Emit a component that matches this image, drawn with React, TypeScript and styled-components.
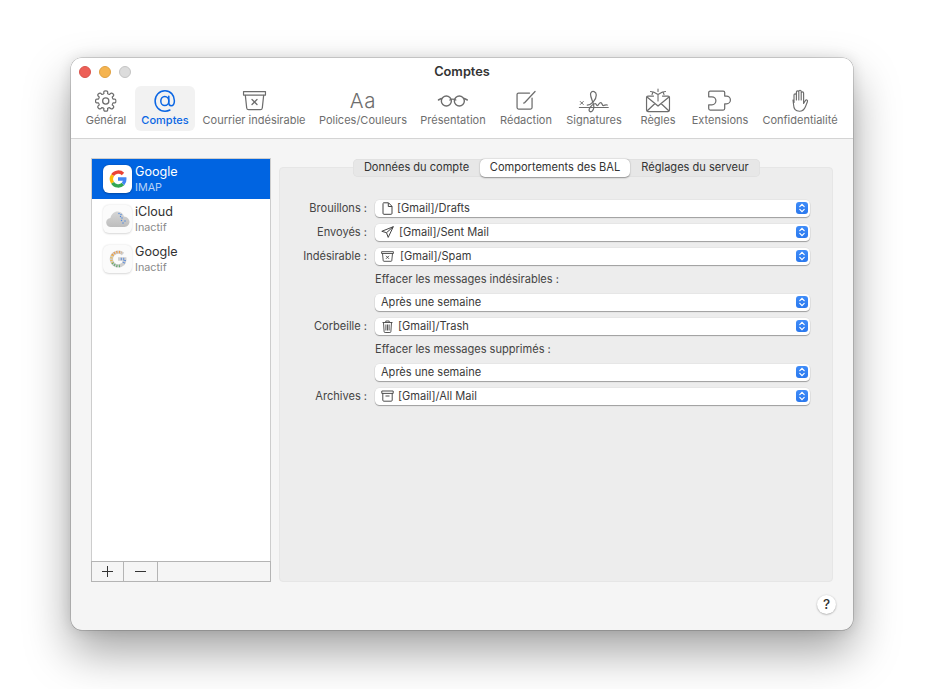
import React from 'react'
import styled, { createGlobalStyle } from 'styled-components'

const Global = createGlobalStyle`
  html, body { margin: 0; padding: 0; background: #fff; height: 100%; overflow: hidden; }
  body { font-family: "Inter", "Liberation Sans", sans-serif; -webkit-font-smoothing: antialiased; }
`

const Page = styled.div`
  position: relative;
  width: 930px;
  height: 689px;
  overflow: hidden;
`

const Window = styled.div`
  position: absolute;
  left: 71px;
  top: 58px;
  width: 782px;
  height: 572px;
  border-radius: 11px;
  background: #f5f5f5;
  box-shadow: 0 0 0 0.5px rgba(0, 0, 0, 0.28), 0 22px 46px rgba(0, 0, 0, 0.36), 0 0 14px rgba(0, 0, 0, 0.12);
`

const TitleBar = styled.div`
  position: relative;
  background: #fff;
  border-radius: 11px 11px 0 0;
  border-bottom: 1px solid #d4d4d4;
  box-sizing: border-box;
  height: 81px;
`

const Lights = styled.div`
  position: absolute;
  left: 8px;
  top: 8px;
  display: flex;
  gap: 8px;
`

const Light = styled.span<{ $color: string; $edge: string }>`
  width: 12px;
  height: 12px;
  border-radius: 50%;
  box-sizing: border-box;
  background: ${(p) => p.$color};
  border: 0.5px solid ${(p) => p.$edge};
`

const Title = styled.div`
  position: absolute;
  top: 6px;
  left: 0;
  width: 100%;
  text-align: center;
  font-size: 12.8px;
  line-height: 16px;
  font-weight: 600;
  color: #333;
`

const Tool = styled.div<{ $center: number; $active?: boolean }>`
  position: absolute;
  top: 28px;
  left: ${(p) => p.$center - 71}px;
  transform: translateX(-50%);
  height: 45px;
  display: flex;
  flex-direction: column;
  align-items: center;
  white-space: nowrap;
  font-size: 11px;
  line-height: 14px;
  color: ${(p) => (p.$active ? '#0a66e4' : '#6e6e6e')};
  font-weight: ${(p) => (p.$active ? 500 : 400)};
  ${(p) => (p.$active ? 'background: #f2f2f2; border-radius: 6px; width: 60px;' : '')}
`

const ToolIcon = styled.div`
  height: 27px;
  box-sizing: border-box;
  padding-top: 2px;
  display: flex;
  align-items: center;
  justify-content: center;
`

const Sidebar = styled.div`
  position: absolute;
  left: 20px;
  top: 100px;
  width: 180px;
  height: 424px;
  box-sizing: border-box;
  border: 1px solid #cdcdcd;
  background: #fff;
  display: flex;
  flex-direction: column;
`

const AccountList = styled.div`
  flex: 1;
`

const Account = styled.div<{ $selected?: boolean }>`
  height: 40px;
  display: flex;
  align-items: center;
  padding-left: 11px;
  background: ${(p) => (p.$selected ? '#0064e1' : 'transparent')};
`

const AppIcon = styled.div<{ $muted?: boolean }>`
  width: 29px;
  height: 28px;
  border-radius: 6px;
  background: ${(p) => (p.$muted ? '#fbfbfb' : '#fff')};
  box-shadow: 0 0.5px 2px rgba(0, 0, 0, ${(p) => (p.$muted ? 0.16 : 0.28)});
  display: flex;
  align-items: center;
  justify-content: center;
  margin-right: 3px;
`

const AccountText = styled.div`
  display: flex;
  flex-direction: column;
`

const AccountName = styled.span<{ $selected?: boolean }>`
  font-size: 12.6px;
  line-height: 15px;
  color: ${(p) => (p.$selected ? '#fff' : '#333')};
`

const AccountState = styled.span<{ $selected?: boolean }>`
  font-size: 10.8px;
  line-height: 14px;
  margin-top: 2px;
  color: ${(p) => (p.$selected ? '#b9d3f6' : '#8a8a8a')};
`

const Footer = styled.div`
  height: 21px;
  display: flex;
  box-sizing: border-box;
  margin: 0 -1px -1px;
  border: 1px solid #b4b4b4;
  background: #f5f5f5;
`

const FooterButton = styled.div<{ $width: number }>`
  width: ${(p) => p.$width}px;
  border-right: 1px solid #b4b4b4;
  display: flex;
  align-items: center;
  justify-content: center;
`

const Panel = styled.div`
  position: absolute;
  left: 208px;
  top: 109px;
  width: 554px;
  height: 415px;
  box-sizing: border-box;
  border-radius: 4px;
  background: #ededed;
  border: 1px solid #e6e6e6;
`

const Tabs = styled.div`
  position: absolute;
  left: 73px;
  top: -9px;
  width: 407px;
  height: 18px;
  box-sizing: border-box;
  display: flex;
  background: #e7e7e7;
  border-radius: 5px;
  box-shadow: inset 0 0 0 0.5px #dcdcdc;
`

const Tab = styled.div<{ $width: number; $active?: boolean }>`
  width: ${(p) => p.$width}px;
  height: 18px;
  line-height: 17px;
  text-align: center;
  font-size: 11.05px;
  color: #333;
  white-space: nowrap;
  ${(p) =>
    p.$active
      ? 'background: #fff; border-radius: 5px; box-shadow: 0 0.5px 1.5px rgba(0,0,0,.4);'
      : ''}
`

const Form = styled.div`
  position: absolute;
  left: 0;
  top: 28px;
  width: 100%;
`

const Row = styled.div<{ $height?: number }>`
  display: flex;
  align-items: center;
  height: ${(p) => p.$height ?? 24}px;
`

const Label = styled.div`
  width: 87px;
  text-align: right;
  font-size: 11.05px;
  color: #444;
  white-space: nowrap;
  margin-right: 8px;
`

const Note = styled.div`
  font-size: 11.05px;
  color: #444;
  white-space: nowrap;
`

const Select = styled.div`
  position: relative;
  width: 435px;
  height: 17px;
  box-sizing: border-box;
  background: #fff;
  border-radius: 4.5px;
  box-shadow: 0 0 0 0.5px rgba(0, 0, 0, 0.06), 0 1px 1px rgba(0, 0, 0, 0.32);
  display: flex;
  align-items: center;
  padding-left: 6px;
  font-size: 11.05px;
  color: #3a3a3a;
  white-space: nowrap;
`

const SelectIcon = styled.span<{ $gap: number }>`
  width: 13px;
  height: 13px;
  margin-right: ${(p) => p.$gap}px;
  display: flex;
  align-items: center;
  justify-content: center;
`

const Stepper = styled.span`
  position: absolute;
  right: 2px;
  top: 2.5px;
  width: 12px;
  height: 12px;
  border-radius: 3px;
  background: linear-gradient(#3f8cf8, #2a78ee);
  display: flex;
  align-items: center;
  justify-content: center;
`

const Help = styled.div`
  position: absolute;
  left: 746px;
  top: 537px;
  width: 19px;
  height: 19px;
  border-radius: 50%;
  background: #fff;
  box-shadow: 0 0.5px 2px rgba(0, 0, 0, 0.35);
  text-align: center;
  font-size: 13.5px;
  line-height: 19px;
  font-weight: 500;
  color: #333;
`

const Line = { fill: 'none', stroke: '#6d6d6d', strokeWidth: 1.25, strokeLinecap: 'round', strokeLinejoin: 'round' } as const

const gearPath = (() => {
  const pts: string[] = []
  const teeth = 8
  const p = (r: number, t: number) =>
    `${(11 + r * Math.cos(t)).toFixed(2)} ${(11 + r * Math.sin(t)).toFixed(2)}`
  for (let i = 0; i < teeth; i++) {
    const a = (i / teeth) * Math.PI * 2 - Math.PI / 2
    const s = Math.PI / teeth
    pts.push(`${i === 0 ? 'M' : 'L'}${p(7.6, a - s * 0.62)}`)
    pts.push(`Q${p(10.6, a - s * 0.62)} ${p(10.2, a)}`)
    pts.push(`Q${p(10.6, a + s * 0.62)} ${p(7.6, a + s * 0.62)}`)
    pts.push(`Q${p(7.1, a + s)} ${p(7.6, a + s * 1.38)}`)
  }
  return pts.join(' ') + 'Z'
})()

const GearIcon = () => (
  <svg width="22" height="22" viewBox="0 0 22 22">
    <path d={gearPath} {...Line} />
    <circle cx="11" cy="11" r="3.1" {...Line} />
  </svg>
)

const AtIcon = () => (
  <svg width="22" height="24" viewBox="0 0 22 24">
    <g fill="none" stroke="#0a66e4" strokeWidth="1.5" strokeLinecap="round">
      <ellipse cx="10.800" cy="12" rx="4" ry="4.600" />
      <path d="M14.800 7.300v6.500c0 1.800 1 2.900 2.300 2.900 2 0 3.300-2 3.300-5C20.400 6 16.400 1.800 11 1.800 5.300 1.800 1.100 6.300 1.100 12s4.200 10.200 9.900 10.200c1.900 0 3.500-.4 4.900-1.200" />
    </g>
  </svg>
)

const JunkIcon = () => (
  <svg width="24" height="21" viewBox="0 0 24 21">
    <path d="M1 1.500h22v3.500H1zM2.800 5l1.400 13a2 2 0 0 0 2 1.700h11.600a2 2 0 0 0 2-1.700L21.200 5M9.500 9.500l5 5M14.500 9.500l-5 5" {...Line} />
  </svg>
)

const FontIcon = styled.span`
  font-size: 20.5px;
  font-weight: 300;
  line-height: 24px;
  color: #6d6d6d;
  letter-spacing: 0.6px;
`

const GlassesIcon = () => (
  <svg width="31" height="14" viewBox="0 0 31 14">
    <path d="M1 6l3-1.500M30 6l-3-1.500M12.500 6c1.800-1 4.200-1 6 0" {...Line} strokeWidth={1.4} />
    <circle cx="9" cy="7" r="5" {...Line} strokeWidth={1.4} />
    <circle cx="22" cy="7" r="5" {...Line} strokeWidth={1.4} />
  </svg>
)

const ComposeIcon = () => (
  <svg width="20" height="21" viewBox="0 0 20 21">
    <path d="M13.500 3H2.500A1.500 1.500 0 0 0 1 4.500v13A1.500 1.500 0 0 0 2.500 19h12a1.500 1.500 0 0 0 1.500-1.500V8M7.500 13l1-.2L19 1.500" {...Line} />
  </svg>
)

const SignatureIcon = () => (
  <svg width="31" height="24" viewBox="0 0 31 24">
    <path d="M1 18.500h29" {...Line} strokeWidth={1.1} />
    <path d="M2 12.500l3 3M5 12.500l-3 3" {...Line} strokeWidth={1} />
    <path d="M9 16c4 0 9-5 9-10 0-3.500-4-5-5.500-2C11 7 15 12 15.500 17c.3 4-2 6.500-4 5.500-2-1.500 1-7 5.500-8 1.500 0 1 2.500 2.500 2 1-1 1.500-3 3-3s1 3 2.500 3 2-1 4-.5" {...Line} strokeWidth={1.25} />
  </svg>
)

const RulesIcon = () => (
  <svg width="25" height="25" viewBox="0 0 25 25">
    <path d="M8 8H2.500A1.500 1.500 0 0 0 1 9.500V22a1.500 1.500 0 0 0 1.500 1.500h20A1.500 1.500 0 0 0 24 22V9.500A1.500 1.500 0 0 0 22.500 8H17M1.500 9l11 9 11-9M1.500 23l8-7.500M23.500 23l-8-7.500" {...Line} />
    <path d="M12.500 13V6.500L8 4M12.500 6.500l4.500-2.500M5 3.500L7.500 4 6.500 6.500M20 3.500L17.500 4l1 2.500M12.500 1v2.500" {...Line} strokeWidth={1.1} />
  </svg>
)

const PuzzleIcon = () => (
  <svg width="25" height="21" viewBox="0 0 25 21">
    <path d="M2.500 1h13a1.500 1.500 0 0 1 1.500 1.500V6h1.800a3.900 3.900 0 0 1 0 7.800H17v4.700a1.500 1.500 0 0 1-1.500 1.500h-13A1.500 1.500 0 0 1 1 18.500v-3.700h3.200a4 4 0 0 0 0-8H1V2.500A1.500 1.500 0 0 1 2.500 1z" {...Line} />
  </svg>
)

const HandIcon = () => (
  <svg width="19" height="24" viewBox="0 0 19 24">
    <path d="M3.600 13.500V6a1.200 1.200 0 0 1 2.400 0v5M6 11V3a1.200 1.200 0 0 1 2.400 0v8M8.400 11V2.400a1.200 1.200 0 0 1 2.400 0V11M10.800 11V4a1.200 1.200 0 0 1 2.400 0v10.500l1.700-2.800c.9-1.400 2.800-.6 2.100 1l-2 5c-1.200 3-3.300 4.500-6 4.500-3.500 0-5.700-2.400-5.800-6.200l-.6-5" {...Line} strokeWidth={1.15} />
  </svg>
)

// anneau du G, en quatre couleurs
const GoogleMark = () => (
  <svg width="20" height="20" viewBox="0 0 20 20" fill="none" strokeWidth="3.4">
    <path d="M4.600 6.200A6.700 6.700 0 0 1 15 5" stroke="#ea4335" />
    <path d="M4.600 6.200a6.900 6.900 0 0 0 0 7.600" stroke="#fbbc05" />
    <path d="M4.600 13.800A6.700 6.700 0 0 0 15 15" stroke="#34a853" />
    <path d="M15 15a6.700 6.700 0 0 0 1.800-5H10" stroke="#4285f4" />
  </svg>
)

const InactiveGoogleMark = () => (
  <svg width="20" height="20" viewBox="0 0 20 20" fill="none">
    <path d="M15 5A6.900 6.900 0 1 0 15 15a6.700 6.700 0 0 0 1.800-5H10" stroke="#cfcfcf" strokeWidth="3.4" />
    <g strokeWidth="2.600" strokeDasharray="1 1.400">
      <path d="M4.600 6.200A6.700 6.700 0 0 1 13.500 3.800" stroke="#ee9a45" />
      <path d="M4.600 6.200a6.900 6.900 0 0 0 0 7.600" stroke="#eeb84a" />
      <path d="M4.600 13.800A6.700 6.700 0 0 0 13 16.500" stroke="#5fa86b" />
      <path d="M15.500 14a6.700 6.700 0 0 0 1.300-4H12" stroke="#5f8fdc" />
    </g>
  </svg>
)

const CloudMark = () => (
  <svg width="24" height="18" viewBox="0 0 24 18">
    <defs>
      <linearGradient id="cloudFill" x1="0" y1="0" x2="0" y2="1">
        <stop offset="0" stopColor="#d6d6d6" />
        <stop offset="1" stopColor="#bdbdbd" />
      </linearGradient>
    </defs>
    <path d="M5 17a4.500 4.500 0 0 1-.6-9C5.500 3.500 9 1 12 1.500c3 .2 5 2 6 5 3 .2 5.500 2.800 5.500 5.300S21.500 17 18.500 17z" fill="url(#cloudFill)" />
    <g fill="#4a86e0">
      <circle cx="13" cy="3.500" r=".7" /><circle cx="15" cy="4.500" r=".7" /><circle cx="14.500" cy="6.500" r=".7" />
      <circle cx="16" cy="8" r=".7" /><circle cx="15.500" cy="10.500" r=".7" /><circle cx="19" cy="11" r=".7" /><circle cx="17" cy="13" r=".7" />
    </g>
  </svg>
)

const FileGlyph = () => (
  <svg width="11" height="13" viewBox="0 0 11 13">
    <path d="M1.500.8h5L10 4.300v7a1 1 0 0 1-1 1H2a1 1 0 0 1-1-1v-9.500a1 1 0 0 1 .5-1zM6.300 1v3.500H10" fill="none" stroke="#444" strokeWidth="1" />
  </svg>
)

const SendGlyph = () => (
  <svg width="13" height="12" viewBox="0 0 13 12">
    <path d="M12.300.7L.8 5.300l4.700 1.400 1.700 4.700zM12.300.7L5.500 6.700" fill="none" stroke="#444" strokeWidth="1" strokeLinejoin="round" />
  </svg>
)

const JunkGlyph = () => (
  <svg width="13" height="11" viewBox="0 0 13 11">
    <path d="M.6.700h11.800v1.800H.6zM1.500 2.500l.7 7a.8.800 0 0 0 .8.800h7a.8.800 0 0 0 .8-.8l.7-7M5 4.800l3 3M8 4.800l-3 3" fill="none" stroke="#444" strokeWidth=".9" />
  </svg>
)

const TrashGlyph = () => (
  <svg width="11" height="13" viewBox="0 0 11 13">
    <path d="M.5 2.500h10M3.800 2.500V1h3.400v1.500M1.500 2.500l.6 9a1 1 0 0 0 1 1h4.800a1 1 0 0 0 1-1l.6-9M3.900 4.500v6M5.500 4.500v6M7.100 4.500v6" fill="none" stroke="#444" strokeWidth=".9" />
  </svg>
)

const ArchiveGlyph = () => (
  <svg width="13" height="12" viewBox="0 0 13 12">
    <path d="M.8 1h11.400v2.400H.8zM1.800 3.400v6.800a1 1 0 0 0 1 1h7.400a1 1 0 0 0 1-1V3.400M4.500 6h4" fill="none" stroke="#444" strokeWidth=".95" />
  </svg>
)

const StepperGlyph = () => (
  <svg width="8" height="10" viewBox="0 0 8 10">
    <path d="M1.800 3.600L4 1.400l2.200 2.200M1.800 6.400L4 8.600l2.200-2.200" fill="none" stroke="#fff" strokeWidth="1.200" strokeLinecap="round" />
  </svg>
)

const tools: { label: string; center: number; icon: React.ReactNode; active?: boolean }[] = [
  { label: 'Général', center: 106, icon: <GearIcon /> },
  { label: 'Comptes', center: 165, icon: <AtIcon />, active: true },
  { label: 'Courrier indésirable', center: 254, icon: <JunkIcon /> },
  { label: 'Polices/Couleurs', center: 363, icon: <FontIcon>Aa</FontIcon> },
  { label: 'Présentation', center: 453, icon: <GlassesIcon /> },
  { label: 'Rédaction', center: 526, icon: <ComposeIcon /> },
  { label: 'Signatures', center: 594, icon: <SignatureIcon /> },
  { label: 'Règles', center: 658, icon: <RulesIcon /> },
  { label: 'Extensions', center: 720, icon: <PuzzleIcon /> },
  { label: 'Confidentialité', center: 800, icon: <HandIcon /> },
]

const Field = ({ label, icon, gap = 4, value }: { label?: string; icon?: React.ReactNode; gap?: number; value: string }) => (
  <Row>
    <Label>{label}</Label>
    <Select>
      {icon && <SelectIcon $gap={gap}>{icon}</SelectIcon>}
      {value}
      <Stepper>
        <StepperGlyph />
      </Stepper>
    </Select>
  </Row>
)

export default function App() {
  return (
    <Page>
      <Global />
      <Window>
        <TitleBar>
          <Lights>
            <Light $color="#ed5f57" $edge="#d9534b" />
            <Light $color="#f5b450" $edge="#e0a140" />
            <Light $color="#dcdcdc" $edge="#c4c4c4" />
          </Lights>
          <Title>Comptes</Title>
          {tools.map((t) => (
            <Tool key={t.label} $center={t.center} $active={t.active}>
              <ToolIcon>{t.icon}</ToolIcon>
              {t.label}
            </Tool>
          ))}
        </TitleBar>

        <Sidebar>
          <AccountList>
            <Account $selected>
              <AppIcon><GoogleMark /></AppIcon>
              <AccountText>
                <AccountName $selected>Google</AccountName>
                <AccountState $selected>IMAP</AccountState>
              </AccountText>
            </Account>
            <Account>
              <AppIcon $muted><CloudMark /></AppIcon>
              <AccountText>
                <AccountName>iCloud</AccountName>
                <AccountState>Inactif</AccountState>
              </AccountText>
            </Account>
            <Account>
              <AppIcon $muted><InactiveGoogleMark /></AppIcon>
              <AccountText>
                <AccountName>Google</AccountName>
                <AccountState>Inactif</AccountState>
              </AccountText>
            </Account>
          </AccountList>
          <Footer>
            <FooterButton $width={31}>
              <svg width="11" height="11" viewBox="0 0 11 11"><path d="M5.500 0v11M0 5.500h11" stroke="#333" strokeWidth="1" /></svg>
            </FooterButton>
            <FooterButton $width={33}>
              <svg width="11" height="3" viewBox="0 0 11 3"><path d="M0 1.500h11" stroke="#333" strokeWidth="1" /></svg>
            </FooterButton>
          </Footer>
        </Sidebar>

        <Panel>
          <Tabs>
            <Tab $width={127}>Données du compte</Tab>
            <Tab $width={150} $active>Comportements des BAL</Tab>
            <Tab $width={130}>Réglages du serveur</Tab>
          </Tabs>
          <Form>
            <Field label="Brouillons :" icon={<FileGlyph />} gap={3} value="[Gmail]/Drafts" />
            <Field label="Envoyés :" icon={<SendGlyph />} gap={5} value="[Gmail]/Sent Mail" />
            <Field label="Indésirable :" icon={<JunkGlyph />} gap={6} value="[Gmail]/Spam" />
            <Row $height={22}>
              <Label />
              <Note>Effacer les messages indésirables :</Note>
            </Row>
            <Field value="Après une semaine" />
            <Field label="Corbeille :" icon={<TrashGlyph />} value="[Gmail]/Trash" />
            <Row $height={22}>
              <Label />
              <Note>Effacer les messages supprimés :</Note>
            </Row>
            <Field value="Après une semaine" />
            <Field label="Archives :" icon={<ArchiveGlyph />} value="[Gmail]/All Mail" />
          </Form>
        </Panel>

        <Help>?</Help>
      </Window>
    </Page>
  )
}
